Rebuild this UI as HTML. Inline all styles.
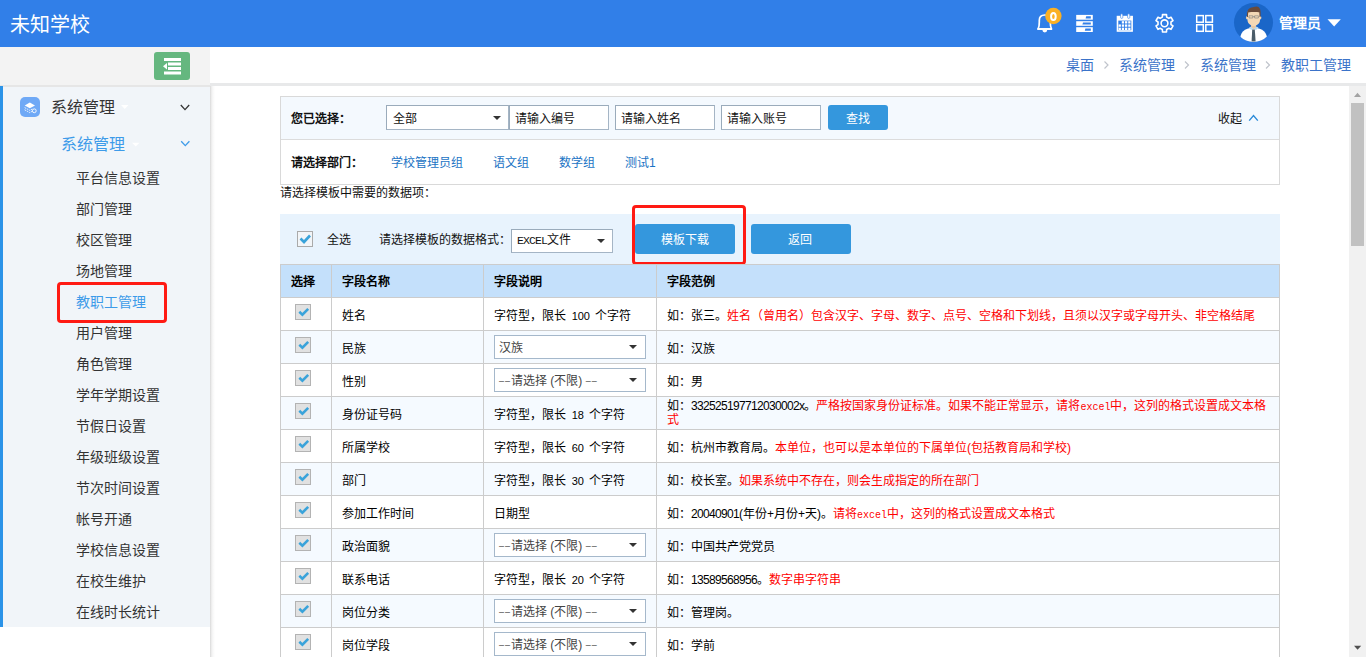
<!DOCTYPE html>
<html lang="zh-CN"><head><meta charset="utf-8">
<style>
*{box-sizing:border-box;margin:0;padding:0}
html,body{width:1366px;height:657px;overflow:hidden;background:#fff;font-family:"Liberation Sans",sans-serif;color:#333}
.abs{position:absolute}
#hdr{left:0;top:0;width:1366px;height:47px;background:#317fe8}
#logo{left:10px;top:11px;font-size:20px;line-height:28px;color:#fff;white-space:nowrap;font-weight:350}
#sbtop{left:0;top:47px;width:210px;height:40px;background:#f3f3f3;border-bottom:2px solid #e6e6e6}
#tog{left:154px;top:52px;width:36px;height:28px;background:#65b77f;border-radius:3px}
#bctop{left:210px;top:47px;width:1156px;height:36px;background:#fff}
#bcline{left:210px;top:83px;width:1156px;height:3px;background:#e8e9ea}
#side{left:0;top:87px;width:210px;height:540px;background:#f1f5f9}
#strip{left:0;top:86px;width:3px;height:541px;background:#2b93e8}
#sshadow{left:210px;top:86px;width:5px;height:571px;background:linear-gradient(to right,#d8d8d8,#ebebeb 25%,#f7f7f7 55%,rgba(255,255,255,0))}
.mi{position:absolute;left:76px;font-size:14px;line-height:20px;color:#333;white-space:nowrap}
#bc{top:55px;font-size:14px;line-height:20px;color:#3b73c9;white-space:nowrap}
#sb{left:1349px;top:86px;width:17px;height:571px;background:#f1f1f1}
#thumb{left:1351px;top:103px;width:13px;height:143px;background:#c1c1c1}
.t12{font-size:12px;line-height:20px;white-space:nowrap;color:#111}
.b{font-weight:bold}
#srch{left:280px;top:96px;width:1000px;height:89px;border:1px solid #d9d9d9}
#srow1{left:281px;top:97px;width:998px;height:43px;background:#f4f9fe;border-bottom:1px solid #dcdcdc}
.inp{position:absolute;height:25px;border:1px solid #a5b5c5;background:#fff;border-top-color:#9aabbb;border-left-color:#9aabbb}
.btn{position:absolute;background:#3497dd;border-radius:3px;color:#fff;text-align:center}
.caret{position:absolute;width:0;height:0;border-left:4px solid transparent;border-right:4px solid transparent;border-top:4.5px solid #333}
#tbar{left:280px;top:214px;width:1000px;height:50px;background:#e8f3fd}
.redbox{position:absolute;border:3px solid #ff1a13;border-radius:4px}
table{position:absolute;left:280px;top:264px;width:1000px;border-collapse:collapse;table-layout:fixed}
td,th{border:1px solid #cccccc;height:33px;padding:0 0 0 10px;font-size:12px;text-align:left;vertical-align:middle;white-space:nowrap;overflow:hidden}
th{background:#c4e0fb;font-weight:bold;color:#000;padding-bottom:2px}
tr.alt td{background:#f5faff}
td{color:#000}
.red{color:#f00}
.two{line-height:13px;padding-top:1px}
.n2{font-family:"Liberation Sans",sans-serif;font-size:11px;letter-spacing:-0.12px;word-spacing:2.8px}
.num{font-family:"Liberation Sans",sans-serif;font-size:12px;letter-spacing:-0.67px}
.h{font-weight:normal;font-family:"Liberation Mono",monospace;font-size:10px}
.d{font-weight:normal;font-family:"Liberation Sans",sans-serif;font-size:12px;letter-spacing:-0.67px}
.ex2{font-family:"Liberation Mono",monospace;font-size:11.5px;letter-spacing:-0.9px}
.d2{font-weight:normal;font-family:"Liberation Sans",sans-serif;font-size:9px;letter-spacing:1px;position:relative;top:-1px}
.p{font-weight:normal;font-family:"Liberation Sans",sans-serif;font-size:12px}
.ex{font-family:"Liberation Mono",monospace;font-size:10px}
.cb{display:inline-block;width:16px;height:16px;border:1px solid #b3b3b3;background:#e1e1e1;position:relative;vertical-align:middle;margin-left:4px;top:-2px}
.cb svg{position:absolute;left:1px;top:1px}
.sel{display:inline-block;position:relative;width:152px;height:24px;border:1px solid #a5b8cb;background:#fff;vertical-align:middle;margin-left:0}
.sel span{position:absolute;left:4px;top:2px;line-height:20px;color:#444}
.sel i{position:absolute;right:8px;top:9px;width:0;height:0;border-left:4px solid transparent;border-right:4px solid transparent;border-top:4.5px solid #333}
</style></head><body>
<div id="hdr" class="abs"></div>
<div id="logo" class="abs">未知学校</div>
<svg class="abs" style="left:0;top:0" width="1366" height="47" viewBox="0 0 1366 47">
 <!-- bell -->
 <path d="M1038.2 28.6 C1039.2 27 1039.3 25 1039.3 22 L1039.3 20.5 C1039.3 17 1041.6 15 1044.8 15 C1048 15 1050.3 17 1050.3 20.5 L1050.3 22 C1050.3 25 1050.4 27 1051.4 28.6" fill="none" stroke="#fff" stroke-width="1.7"/>
 <path d="M1037.2 29 L1052.2 29" stroke="#fff" stroke-width="2"/>
 <path d="M1042.4 30 A2.4 2.4 0 0 0 1047.2 30 Z" fill="#fff"/>
 <circle cx="1053.4" cy="16" r="8.2" fill="#fbb023"/>
 <ellipse cx="1053.4" cy="16.4" rx="2.3" ry="3.5" fill="none" stroke="#fff" stroke-width="2"/>
 <!-- server -->
 <rect x="1076.2" y="14.9" width="16.6" height="4.8" fill="#fff"/>
 <rect x="1076.2" y="21.2" width="16.6" height="4.6" fill="#fff"/>
 <rect x="1076.2" y="27.2" width="16.6" height="4.8" fill="#fff"/>
 <path d="M1086.2 16.2 L1090.8 16.2 L1090.8 18.4 L1085.6 18.4 Z" fill="#317fe8"/>
 <path d="M1083 22.4 L1090.8 22.4 L1090.8 24.6 L1082.4 24.6 Z" fill="#317fe8"/>
 <path d="M1085.4 28.6 L1090.8 28.6 L1090.8 30.8 L1084.8 30.8 Z" fill="#317fe8"/>
 <!-- calendar -->
 <rect x="1117.5" y="16.6" width="14.6" height="14.4" fill="none" stroke="#fff" stroke-width="1.6"/>
 <rect x="1117" y="16" width="15.6" height="4.6" fill="#fff"/>
 <rect x="1120.6" y="13.8" width="2.2" height="4.6" rx="1.1" fill="#fff" stroke="#317fe8" stroke-width="0.6"/>
 <rect x="1127.6" y="13.8" width="2.2" height="4.6" rx="1.1" fill="#fff" stroke="#317fe8" stroke-width="0.6"/>
 <g fill="#fff"><rect x="1121.80" y="21.20" width="2.3" height="2.3"/><rect x="1125.00" y="21.20" width="2.3" height="2.3"/><rect x="1128.20" y="21.20" width="2.3" height="2.3"/><rect x="1118.60" y="24.45" width="2.3" height="2.3"/><rect x="1121.80" y="24.45" width="2.3" height="2.3"/><rect x="1125.00" y="24.45" width="2.3" height="2.3"/><rect x="1128.20" y="24.45" width="2.3" height="2.3"/><rect x="1118.60" y="27.70" width="2.3" height="2.3"/><rect x="1121.80" y="27.70" width="2.3" height="2.3"/><rect x="1125.00" y="27.70" width="2.3" height="2.3"/><rect x="1128.20" y="27.70" width="2.3" height="2.3"/></g>
 <!-- gear -->
 <path id="gear" fill="none" stroke="#fff" stroke-width="1.6" stroke-linejoin="round" d="M1166.65 17.06 L1166.50 14.63 L1162.50 14.63 L1162.35 17.06 L1160.17 18.32 L1157.99 17.23 L1155.99 20.70 L1158.02 22.04 L1158.02 24.56 L1155.99 25.90 L1157.99 29.37 L1160.17 28.28 L1162.35 29.54 L1162.50 31.97 L1166.50 31.97 L1166.65 29.54 L1168.83 28.28 L1171.01 29.37 L1173.01 25.90 L1170.98 24.56 L1170.98 22.04 L1173.01 20.70 L1171.01 17.23 L1168.83 18.32 Z"/>
 <circle cx="1164.5" cy="23.3" r="3.4" fill="none" stroke="#fff" stroke-width="1.6"/>
 <!-- grid -->
 <g fill="none" stroke="#fff" stroke-width="1.5">
  <rect x="1196.7" y="15.6" width="6.6" height="6.6"/><rect x="1205.8" y="15.6" width="6.6" height="6.6"/>
  <rect x="1196.7" y="24.7" width="6.6" height="6.6"/><rect x="1205.8" y="24.7" width="6.6" height="6.6"/>
 </g>
 <!-- avatar -->
 <circle cx="1253.5" cy="22.5" r="19.5" fill="#1a66c8"/>
 <defs><clipPath id="avc"><circle cx="21.5" cy="21.5" r="19.5"/></clipPath></defs>
 <g transform="translate(1232,1)" clip-path="url(#avc)">
  <path d="M8 40 C8 31 12 27.5 21.5 26.5 C31 27.5 35.3 31 35.3 40 C30 42.5 14 42.5 8 40 Z" fill="#fff"/>
  <path d="M17 26.5 L21.5 24.5 L26.5 26.5 L24 29 L21.5 28 L19 29 Z" fill="#b9daf0"/>
  <path d="M20.2 28.5 L22.8 28.5 L23.6 40.5 L19.6 40.5 Z" fill="#4b5c68"/>
  <path d="M19 21 L19 26 L21.5 28 L24 26 L24 21 Z" fill="#e8c7a2"/>
  <ellipse cx="15.2" cy="16.8" rx="1.2" ry="1.8" fill="#f0d3b2"/>
  <ellipse cx="28.2" cy="16.8" rx="1.2" ry="1.8" fill="#f0d3b2"/>
  <path d="M15.5 12 C15.5 9 18 8 21.7 8 C25.5 8 28 9 28 12 L28 19 C28 22.5 24.5 25 21.7 25 C19 25 15.5 22.5 15.5 19 Z" fill="#f3d8b6"/>
  <path d="M15 16 C14.5 9.5 16.5 6.5 21 6.2 C23 5.5 25.5 5 26.5 6 C28.5 7.5 29 10.5 28.5 16 L27.6 16 L27.3 11.2 C25 10.8 19 10.8 16.2 11.4 L15.9 16 Z" fill="#6a4b3b"/>
  <path d="M17 14.8 L20.8 14.8 L20.8 17 L17 17 Z M22.6 14.8 L26.4 14.8 L26.4 17 L22.6 17 Z M20.8 15.6 L22.6 15.6" fill="none" stroke="#7a7a7a" stroke-width="0.6"/>
 </g>
 <text x="1279.3" y="28" font-family="Liberation Sans" font-size="14" fill="#fff" font-weight="bold">管理员</text>
 <path d="M1327.5 19.2 L1340.8 19.2 L1334.15 26.4 Z" fill="#fff"/>
</svg>


<div id="sbtop" class="abs"></div>
<div id="tog" class="abs">
 <svg width="36" height="28" viewBox="0 0 36 28">
  <rect x="10" y="6" width="17" height="3" fill="#fff"/>
  <rect x="14" y="10.5" width="13" height="3" fill="#fff"/>
  <rect x="14" y="15" width="13" height="3" fill="#fff"/>
  <rect x="10" y="19.5" width="17" height="3" fill="#fff"/>
  <path d="M9 14.2 L13 11 L13 17.4 Z" fill="#fff"/>
 </svg>
</div>
<div id="bctop" class="abs"></div>
<div id="bcline" class="abs"></div>
<div id="side" class="abs"></div>
<div id="strip" class="abs"></div>
<div id="sshadow" class="abs"></div>

<div class="abs" style="left:20px;top:97px;width:20px;height:20px;background:#6fa9f6;border-radius:5px"></div>
<div class="abs" style="left:51px;top:97px;font-size:16px;line-height:22px;color:#333">系统管理</div>
<div class="abs" style="left:61px;top:134px;font-size:16px;line-height:22px;color:#3d9be9">系统管理</div>

<div class="mi" style="top:168px">平台信息设置</div>
<div class="mi" style="top:199px">部门管理</div>
<div class="mi" style="top:230px">校区管理</div>
<div class="mi" style="top:261px">场地管理</div>
<div class="mi" style="top:292px;color:#3d9be9">教职工管理</div>
<div class="mi" style="top:323px">用户管理</div>
<div class="mi" style="top:354px">角色管理</div>
<div class="mi" style="top:385px">学年学期设置</div>
<div class="mi" style="top:416px">节假日设置</div>
<div class="mi" style="top:447px">年级班级设置</div>
<div class="mi" style="top:478px">节次时间设置</div>
<div class="mi" style="top:509px">帐号开通</div>
<div class="mi" style="top:540px">学校信息设置</div>
<div class="mi" style="top:571px">在校生维护</div>
<div class="mi" style="top:602px">在线时长统计</div>
<div class="redbox" style="left:57px;top:282px;width:110px;height:41px"></div>

<div id="bc" class="abs" style="left:1066px">桌面</div>
<div id="bc" class="abs" style="left:1119px">系统管理</div>
<div id="bc" class="abs" style="left:1200px">系统管理</div>
<div id="bc" class="abs" style="left:1281px">教职工管理</div>

<div id="sb" class="abs"></div>
<div id="thumb" class="abs"></div>

<!-- search panel -->
<div id="srch" class="abs"></div>
<div id="srow1" class="abs"></div>
<div class="abs t12 b" style="left:291px;top:109px">您已选择：</div>
<div class="inp" style="left:386px;top:105px;width:123px"></div>
<div class="abs t12" style="left:393px;top:109px">全部</div>
<div class="caret" style="left:493px;top:116px"></div>
<div class="inp" style="left:509px;top:105px;width:100px"></div>
<div class="abs t12" style="left:515px;top:109px">请输入编号</div>
<div class="inp" style="left:615px;top:105px;width:100px"></div>
<div class="abs t12" style="left:621px;top:109px">请输入姓名</div>
<div class="inp" style="left:721px;top:105px;width:100px"></div>
<div class="abs t12" style="left:727px;top:109px">请输入账号</div>
<div class="btn" style="left:828px;top:105px;width:60px;height:25px"></div>
<div class="abs t12" style="left:846px;top:109px;color:#fff">查找</div>
<div class="abs t12" style="left:1218px;top:109px">收起</div>

<div class="abs t12 b" style="left:291px;top:153px">请选择部门：</div>
<div class="abs t12" style="left:391px;top:153px;color:#1a73c4">学校管理员组</div>
<div class="abs t12" style="left:493px;top:153px;color:#1a73c4">语文组</div>
<div class="abs t12" style="left:559px;top:153px;color:#1a73c4">数学组</div>
<div class="abs t12" style="left:625px;top:153px;color:#1a73c4">测试1</div>

<div class="abs t12" style="left:280px;top:183px">请选择模板中需要的数据项：</div>

<div id="tbar" class="abs"></div>
<div class="abs" style="left:297px;top:231px;width:16px;height:16px;border:1px solid #aaa;background:#f2f5f8"></div>
<div class="abs t12" style="left:327px;top:230px">全选</div>
<div class="abs t12" style="left:379px;top:230px">请选择模板的数据格式：</div>
<div class="inp" style="left:511px;top:229px;width:102px;height:24px"></div>
<div class="abs t12" style="left:517px;top:230px"><span class="ex2">EXCEL</span>文件</div>
<div class="caret" style="left:597px;top:239px"></div>
<div class="btn" style="left:635px;top:224px;width:100px;height:30px"></div>
<div class="abs t12" style="left:661px;top:230px;color:#fff">模板下载</div>
<div class="btn" style="left:751px;top:224px;width:100px;height:30px"></div>
<div class="abs t12" style="left:788px;top:230px;color:#fff">返回</div>
<div class="redbox" style="left:632px;top:205px;width:114px;height:60px"></div>

<table>
<colgroup><col style="width:51px"><col style="width:152px"><col style="width:173px"><col style="width:623px"></colgroup>
<tr><th>选择</th><th>字段名称</th><th>字段说明</th><th>字段范例</th></tr>
<tr><td><span class='cb'><svg width='14' height='14' viewBox='0 0 14 14'><path d='M2.3 5.8 L5.4 8.6 L11.2 2.8' stroke='#3aa3da' stroke-width='2.6' fill='none'/></svg></span></td><td>姓名</td><td>字符型，限长<span class='n2'> 100 </span>个字符</td><td>如：张三。<span class='red'>姓名（曾用名）包含汉字、字母、数字、点号、空格和下划线，且须以汉字或字母开头、非空格结尾</span></td></tr>
<tr class='alt'><td><span class='cb'><svg width='14' height='14' viewBox='0 0 14 14'><path d='M2.3 5.8 L5.4 8.6 L11.2 2.8' stroke='#3aa3da' stroke-width='2.6' fill='none'/></svg></span></td><td>民族</td><td><span class='sel'><span>汉族</span><i></i></span></td><td>如：汉族</td></tr>
<tr><td><span class='cb'><svg width='14' height='14' viewBox='0 0 14 14'><path d='M2.3 5.8 L5.4 8.6 L11.2 2.8' stroke='#3aa3da' stroke-width='2.6' fill='none'/></svg></span></td><td>性别</td><td><span class='sel'><span><b class='d2'>&#8211;&#8211;</b>请选择<b class='p'> (</b>不限<b class='p'>)</b><b class='d2'> &#8211;&#8211;</b></span><i></i></span></td><td>如：男</td></tr>
<tr class='alt'><td><span class='cb'><svg width='14' height='14' viewBox='0 0 14 14'><path d='M2.3 5.8 L5.4 8.6 L11.2 2.8' stroke='#3aa3da' stroke-width='2.6' fill='none'/></svg></span></td><td>身份证号码</td><td>字符型，限长<span class='n2'> 18 </span>个字符</td><td><div class='two'>如：<span class='num'>332525197712030002x</span>。<span class='red'>严格按国家身份证标准。如果不能正常显示，请将<span class='ex'>excel</span>中，这列的格式设置成文本格<br>式</span></div></td></tr>
<tr><td><span class='cb'><svg width='14' height='14' viewBox='0 0 14 14'><path d='M2.3 5.8 L5.4 8.6 L11.2 2.8' stroke='#3aa3da' stroke-width='2.6' fill='none'/></svg></span></td><td>所属学校</td><td>字符型，限长<span class='n2'> 60 </span>个字符</td><td>如：杭州市教育局。<span class='red'>本单位，也可以是本单位的下属单位(包括教育局和学校)</span></td></tr>
<tr class='alt'><td><span class='cb'><svg width='14' height='14' viewBox='0 0 14 14'><path d='M2.3 5.8 L5.4 8.6 L11.2 2.8' stroke='#3aa3da' stroke-width='2.6' fill='none'/></svg></span></td><td>部门</td><td>字符型，限长<span class='n2'> 30 </span>个字符</td><td>如：校长室。<span class='red'>如果系统中不存在，则会生成指定的所在部门</span></td></tr>
<tr><td><span class='cb'><svg width='14' height='14' viewBox='0 0 14 14'><path d='M2.3 5.8 L5.4 8.6 L11.2 2.8' stroke='#3aa3da' stroke-width='2.6' fill='none'/></svg></span></td><td>参加工作时间</td><td>日期型</td><td>如：<span class='num'>20040901</span>(年份+月份+天)。<span class='red'>请将<span class='ex'>excel</span>中，这列的格式设置成文本格式</span></td></tr>
<tr class='alt'><td><span class='cb'><svg width='14' height='14' viewBox='0 0 14 14'><path d='M2.3 5.8 L5.4 8.6 L11.2 2.8' stroke='#3aa3da' stroke-width='2.6' fill='none'/></svg></span></td><td>政治面貌</td><td><span class='sel'><span><b class='d2'>&#8211;&#8211;</b>请选择<b class='p'> (</b>不限<b class='p'>)</b><b class='d2'> &#8211;&#8211;</b></span><i></i></span></td><td>如：中国共产党党员</td></tr>
<tr><td><span class='cb'><svg width='14' height='14' viewBox='0 0 14 14'><path d='M2.3 5.8 L5.4 8.6 L11.2 2.8' stroke='#3aa3da' stroke-width='2.6' fill='none'/></svg></span></td><td>联系电话</td><td>字符型，限长<span class='n2'> 20 </span>个字符</td><td>如：<span class='num'>13589568956</span>。<span class='red'>数字串字符串</span></td></tr>
<tr class='alt'><td><span class='cb'><svg width='14' height='14' viewBox='0 0 14 14'><path d='M2.3 5.8 L5.4 8.6 L11.2 2.8' stroke='#3aa3da' stroke-width='2.6' fill='none'/></svg></span></td><td>岗位分类</td><td><span class='sel'><span><b class='d2'>&#8211;&#8211;</b>请选择<b class='p'> (</b>不限<b class='p'>)</b><b class='d2'> &#8211;&#8211;</b></span><i></i></span></td><td>如：管理岗。</td></tr>
<tr><td><span class='cb'><svg width='14' height='14' viewBox='0 0 14 14'><path d='M2.3 5.8 L5.4 8.6 L11.2 2.8' stroke='#3aa3da' stroke-width='2.6' fill='none'/></svg></span></td><td>岗位学段</td><td><span class='sel'><span><b class='d2'>&#8211;&#8211;</b>请选择<b class='p'> (</b>不限<b class='p'>)</b><b class='d2'> &#8211;&#8211;</b></span><i></i></span></td><td>如：学前</td></tr>
</table>


<svg class="abs" style="left:0;top:47px" width="1366" height="610" viewBox="0 47 1366 610">
 <!-- breadcrumb chevrons -->
 <g fill="none" stroke="#c0c4cc" stroke-width="1.2">
  <path d="M1104.5 61.5 L1108 65 L1104.5 68.5"/>
  <path d="M1185 61.5 L1188.5 65 L1185 68.5"/>
  <path d="M1266 61.5 L1269.5 65 L1266 68.5"/>
 </g>
 <!-- scrollbar arrows -->
 <path d="M1354 97 L1361 97 L1357.5 92.7 Z" fill="#a3a3a3"/>
 <path d="M1354 645.7 L1361.2 645.7 L1357.6 649.8 Z" fill="#505050"/>
 <!-- sidebar icon -->
 <g>
  <path d="M29.8 102.6 L35 105.4 L29.8 108.2 L24.7 105.4 Z" fill="#fff"/>
  <path d="M24.6 107.6 L29.8 110.4 L33 108.7" fill="none" stroke="#fff" stroke-width="0.9" stroke-dasharray="1.6 0.8" opacity="0.9"/>
  <path d="M24.6 109.8 L29.8 112.6 L32 111.4" fill="none" stroke="#fff" stroke-width="0.9" stroke-dasharray="1.6 0.8" opacity="0.9"/>
  <circle cx="34.3" cy="110.8" r="1.9" fill="none" stroke="#fff" stroke-width="0.9"/>
 </g>
 <!-- sidebar chevrons -->
 <path d="M180.8 105 L185 109.6 L189.2 105" fill="none" stroke="#333" stroke-width="1.3"/>
 <path d="M181.2 141.2 L185.3 145.6 L189.4 141.2" fill="none" stroke="#3d9be9" stroke-width="1.3"/>
 <!-- white carets -->
 <path d="M121 105 L128.5 105 L124.75 109 Z" fill="#fff"/>
 <path d="M132 142.7 L139.5 142.7 L135.75 146.6 Z" fill="#fff"/>
 <!-- shouqi chevron -->
 <path d="M1249.2 120.6 L1253.5 115.6 L1257.8 120.6" fill="none" stroke="#2a8ad8" stroke-width="1.4"/>
 <!-- header checkbox check -->
 <path d="M300.5 238.5 L304 242 L310 235.5" fill="none" stroke="#3aa3da" stroke-width="2.6"/>
</svg>
</body></html>
